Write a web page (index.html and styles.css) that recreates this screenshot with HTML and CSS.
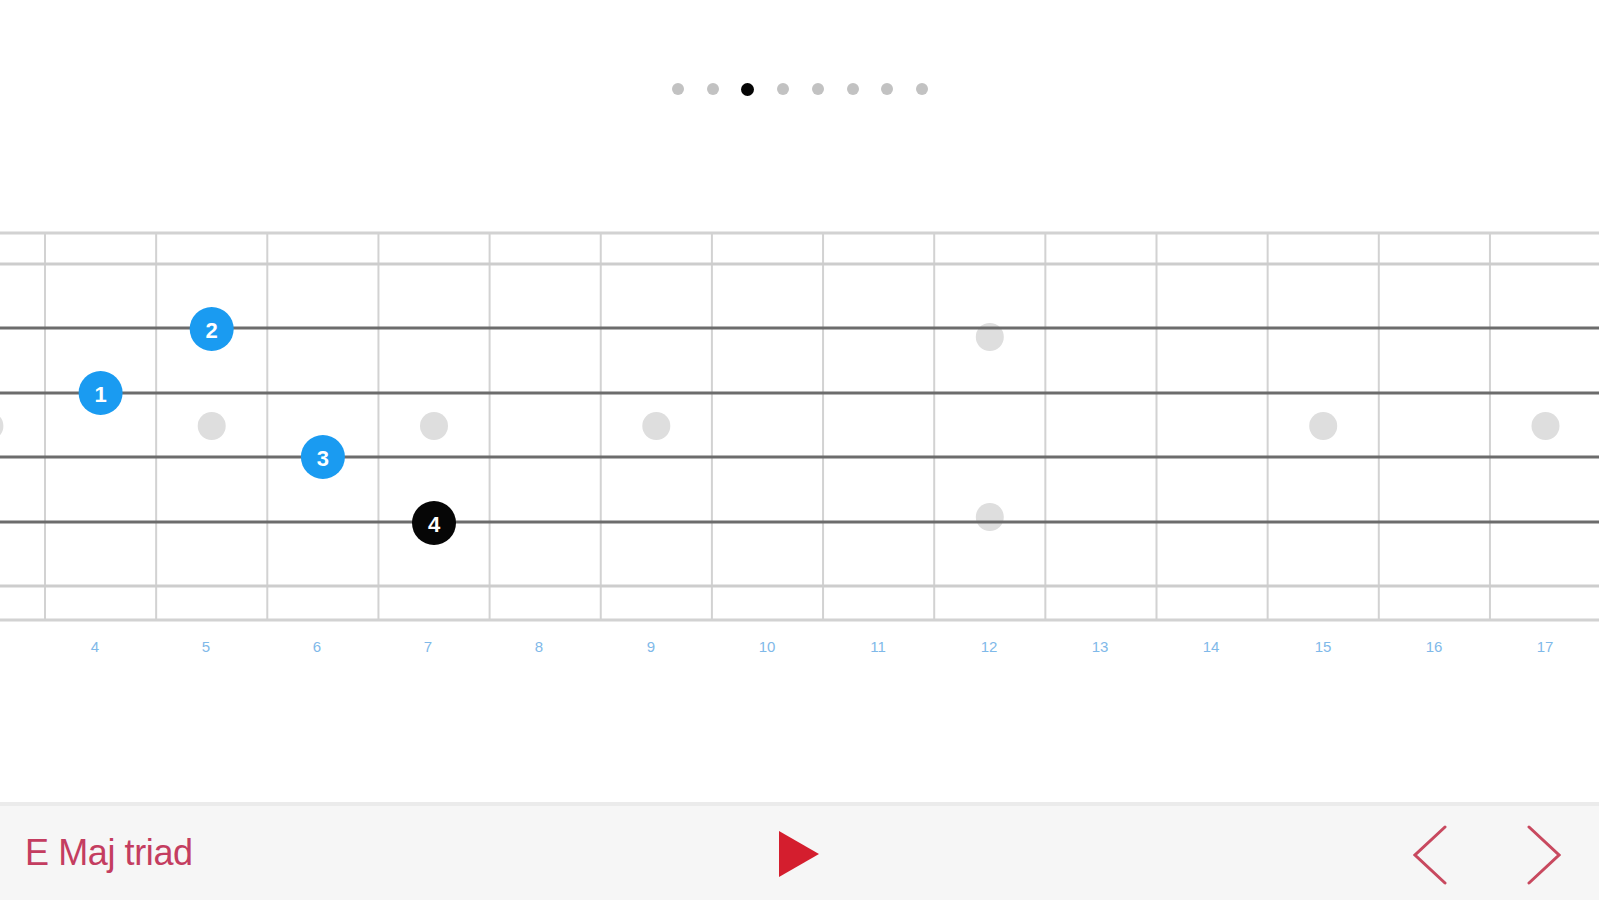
FILE: index.html
```html
<!DOCTYPE html>
<html>
<head>
<meta charset="utf-8">
<link rel="stylesheet" href="styles.css">
</head>
<body>
<div class="page">
  <div class="pager">
    <span class="dot"></span>
    <span class="dot"></span>
    <span class="dot active"></span>
    <span class="dot"></span>
    <span class="dot"></span>
    <span class="dot"></span>
    <span class="dot"></span>
    <span class="dot"></span>
  </div>
  <svg class="board" viewBox="0 178 1599 624" width="1599" height="624" xmlns="http://www.w3.org/2000/svg">
    <g class="frets">
      <line x1="-66.15" y1="233" x2="-66.15" y2="620"/>
      <line x1="45" y1="233" x2="45" y2="620"/>
      <line x1="156.15" y1="233" x2="156.15" y2="620"/>
      <line x1="267.3" y1="233" x2="267.3" y2="620"/>
      <line x1="378.45" y1="233" x2="378.45" y2="620"/>
      <line x1="489.6" y1="233" x2="489.6" y2="620"/>
      <line x1="600.75" y1="233" x2="600.75" y2="620"/>
      <line x1="711.9" y1="233" x2="711.9" y2="620"/>
      <line x1="823.05" y1="233" x2="823.05" y2="620"/>
      <line x1="934.2" y1="233" x2="934.2" y2="620"/>
      <line x1="1045.35" y1="233" x2="1045.35" y2="620"/>
      <line x1="1156.5" y1="233" x2="1156.5" y2="620"/>
      <line x1="1267.65" y1="233" x2="1267.65" y2="620"/>
      <line x1="1378.8" y1="233" x2="1378.8" y2="620"/>
      <line x1="1489.95" y1="233" x2="1489.95" y2="620"/>
    </g>
    <g class="inlays">
      <circle cx="-10.6" cy="426" r="14"/>
      <circle cx="211.7" cy="426" r="14"/>
      <circle cx="434" cy="426" r="14"/>
      <circle cx="656.3" cy="426" r="14"/>
      <circle cx="989.8" cy="337" r="14"/>
      <circle cx="989.8" cy="517" r="14"/>
      <circle cx="1323.2" cy="426" r="14"/>
      <circle cx="1545.5" cy="426" r="14"/>
    </g>
    <g class="edges">
      <line x1="0" y1="233" x2="1599" y2="233"/>
      <line x1="0" y1="620" x2="1599" y2="620"/>
    </g>
    <g class="strings-light">
      <line x1="0" y1="264" x2="1599" y2="264"/>
      <line x1="0" y1="586" x2="1599" y2="586"/>
    </g>
    <g class="strings">
      <line x1="0" y1="328" x2="1599" y2="328"/>
      <line x1="0" y1="393" x2="1599" y2="393"/>
      <line x1="0" y1="457" x2="1599" y2="457"/>
      <line x1="0" y1="522" x2="1599" y2="522"/>
    </g>
    <g class="notes">
      <circle class="note" cx="100.6" cy="393" r="22"/>
      <text class="note-num" x="100.6" y="394">1</text>
      <circle class="note" cx="211.7" cy="329" r="22"/>
      <text class="note-num" x="211.7" y="330">2</text>
      <circle class="note" cx="322.9" cy="457" r="22"/>
      <text class="note-num" x="322.9" y="458">3</text>
      <circle class="note root" cx="434" cy="523" r="22"/>
      <text class="note-num" x="434" y="524">4</text>
    </g>
    <g class="labels">
      <text x="95" y="646">4</text>
      <text x="206" y="646">5</text>
      <text x="317" y="646">6</text>
      <text x="428" y="646">7</text>
      <text x="539" y="646">8</text>
      <text x="651" y="646">9</text>
      <text x="767" y="646">10</text>
      <text x="878" y="646">11</text>
      <text x="989" y="646">12</text>
      <text x="1100" y="646">13</text>
      <text x="1211" y="646">14</text>
      <text x="1323" y="646">15</text>
      <text x="1434" y="646">16</text>
      <text x="1545" y="646">17</text>
    </g>
  </svg>
  <div class="bar">
    <div class="title">E Maj triad</div>
    <div class="play">
      <svg viewBox="0 0 40 46" width="40" height="46" xmlns="http://www.w3.org/2000/svg">
        <polygon points="0,0 40,23 0,46" fill="#d41e2e"/>
      </svg>
    </div>
    <div class="nav">
      <svg class="chev" viewBox="0 0 34 60" width="34" height="60" xmlns="http://www.w3.org/2000/svg">
        <polyline points="32,2 2,30 32,58"/>
      </svg>
      <svg class="chev" viewBox="0 0 34 60" width="34" height="60" xmlns="http://www.w3.org/2000/svg">
        <polyline points="2,2 32,30 2,58"/>
      </svg>
    </div>
  </div>
</div>
</body>
</html>
```

FILE: styles.css
```css
html, body {
  margin: 0;
  padding: 0;
  background: #ffffff;
  font-family: "Liberation Sans", Arial, sans-serif;
}

.page {
  width: 1599px;
  height: 900px;
  display: flex;
  flex-direction: column;
  overflow: hidden;
}

.pager {
  height: 178px;
  display: flex;
  justify-content: center;
  align-items: center;
  gap: 22.7px;
  padding-left: 1px;
  box-sizing: border-box;
}

.dot {
  width: 12px;
  height: 12px;
  border-radius: 50%;
  background: #c2c2c2;
}

.dot.active {
  width: 13px;
  height: 13px;
  background: #050505;
}

.board {
  display: block;
  flex: none;
}

.frets line {
  stroke: #d2d2d2;
  stroke-width: 2;
}

.inlays circle {
  fill: #dedede;
}

.edges line {
  stroke: #d2d2d2;
  stroke-width: 3;
}

.strings-light line {
  stroke: #cdcdcd;
  stroke-width: 3;
}

.strings line {
  stroke: #6c6c6c;
  stroke-width: 3;
}

.note {
  fill: #1a9bf1;
}

.note.root {
  fill: #060606;
}

.note-num {
  fill: #ffffff;
  font-family: "Liberation Sans", Arial, sans-serif;
  font-weight: bold;
  font-size: 22px;
  text-anchor: middle;
  dominant-baseline: central;
}

.labels text {
  fill: #7fb9e9;
  font-family: "Liberation Sans", Arial, sans-serif;
  font-size: 15px;
  text-anchor: middle;
  dominant-baseline: central;
}

.bar {
  flex: 1;
  background: #f6f6f6;
  border-top: 4px solid #ebebeb;
  display: grid;
  grid-template-columns: 1fr auto 1fr;
  align-items: center;
}

.title {
  padding-left: 25px;
  font-size: 36px;
  color: #c43d60;
  letter-spacing: -0.4px;
}

.play {
  display: flex;
  padding-right: 2px;
  padding-top: 2px;
}

.nav {
  justify-self: end;
  display: flex;
  gap: 80px;
  padding-right: 38px;
  padding-top: 4px;
}

.chev {
  display: block;
}

.chev polyline {
  fill: none;
  stroke: #c8495f;
  stroke-width: 3;
  stroke-linecap: round;
  stroke-linejoin: miter;
}
```
